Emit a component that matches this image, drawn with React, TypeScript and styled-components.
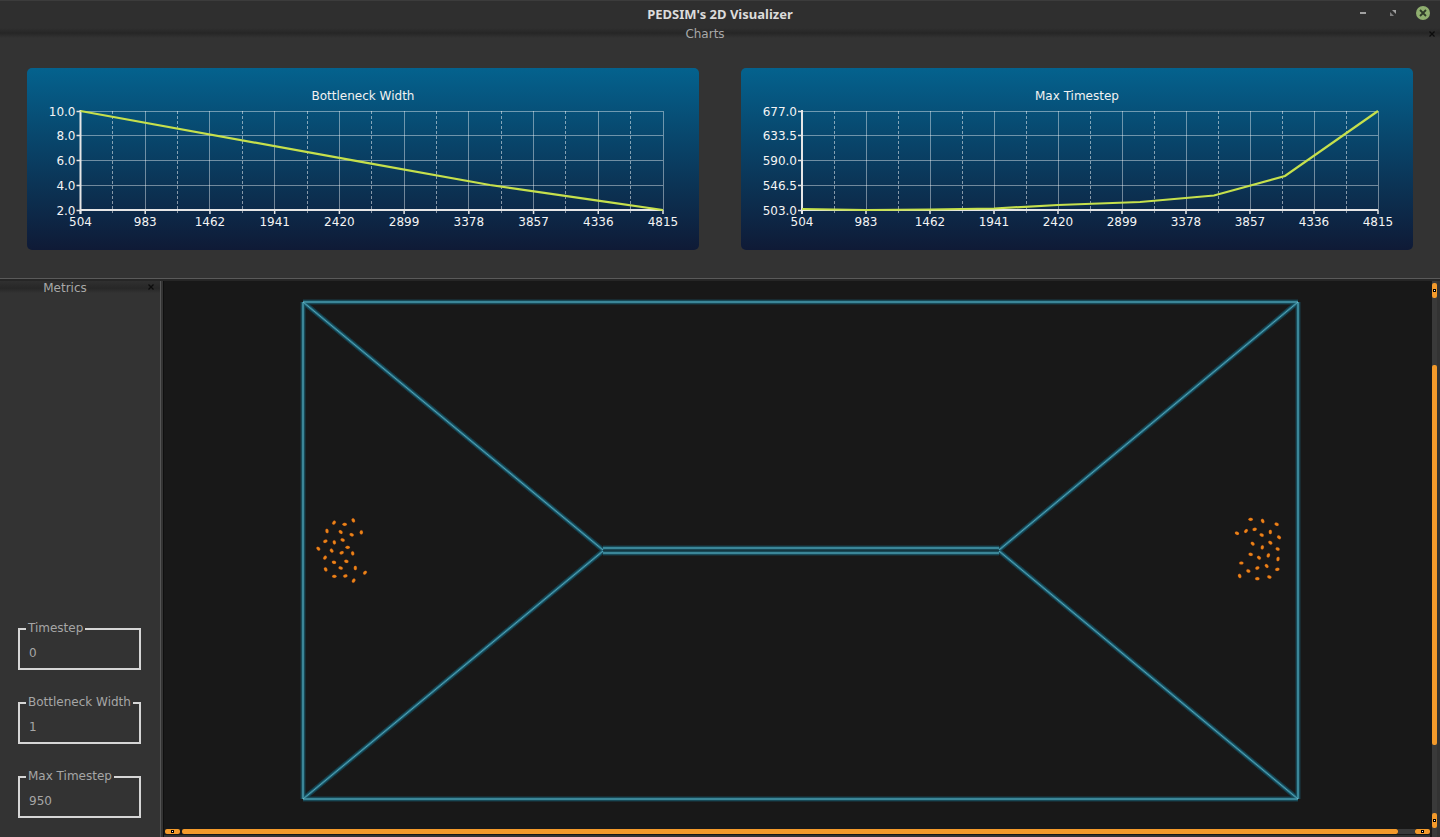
import React from "react";
import styled, { createGlobalStyle } from "styled-components";

const Global = createGlobalStyle`
  html, body { margin: 0; padding: 0; background: #333; }
  body { font-family: "DejaVu Sans", sans-serif; overflow: hidden; }
  #root { width: 1440px; height: 837px; }
`;

const Window = styled.div`
  width: 1440px;
  height: 837px;
  display: flex;
  flex-direction: column;
  background: #333333;
  overflow: hidden;
`;

const TitleBar = styled.header`
  flex: 0 0 28px;
  box-sizing: border-box;
  position: relative;
  display: flex;
  align-items: center;
  justify-content: center;
  background: #2f2f2f;
  border-top: 1px solid #3c3c3c;
  color: #dcdcdc;
  font-family: "Noto Sans", sans-serif;
  font-size: 13px;
  font-weight: 700;
  padding-bottom: 2px;
`;

const WindowControls = styled.div`
  position: absolute;
  right: 9px;
  top: 4px;
  display: flex;
  align-items: center;
  gap: 14px;
`;

const ControlIcon = styled.svg`
  display: block;
`;

const DockTitle = styled.div`
  flex: 0 0 10px;
  height: 10px;
  box-sizing: border-box;
  position: relative;
  display: flex;
  align-items: center;
  justify-content: center;
  color: #a8a8a8;
  font-size: 12px;
  padding: 2px 30px 0 0;
  background: linear-gradient(#2f2f2f, #262626 50%, #333333);
`;

const DockClose = styled.svg<{ $right: number }>`
  position: absolute;
  right: ${(p) => p.$right}px;
  top: 3px;
`;

const ChartsDock = styled.section`
  flex: 0 0 251px;
  box-sizing: border-box;
  display: flex;
  flex-direction: column;
  border-bottom: 1px solid #5a5a5a;
`;

const ChartsRow = styled.div`
  flex: 1;
  display: flex;
  gap: 42px;
  padding: 30px 27px 0;
`;

const ChartCard = styled.div`
  flex: 0 0 672px;
  height: 182px;
  border-radius: 5px;
  background: linear-gradient(#04628e, #0f1a36);
  display: flex;
  flex-direction: column;
  align-items: center;
`;

const ChartTitle = styled.div`
  color: #f2f2f2;
  font-size: 12px;
  line-height: 14px;
  margin-top: 21px;
  height: 14px;
`;

const ChartSvg = styled.svg`
  display: block;
`;

const Divider = styled.div`
  flex: 0 0 2px;
  background: #262626;
`;

const Lower = styled.div`
  flex: 1;
  min-height: 0;
  display: flex;
`;

const MetricsDock = styled.aside`
  flex: 0 0 160px;
  display: flex;
  flex-direction: column;
`;

const MetricsTitle = styled(DockTitle)`
  flex: 0 0 12px;
  height: 12px;
  padding: 2px 30px 0 0;
  background: linear-gradient(#303030, #272727 60%, #333333);
`;

const MetricsBody = styled.div`
  flex: 1;
  display: flex;
  flex-direction: column;
  justify-content: flex-end;
  gap: 32px;
  padding: 0 19px 19px 18px;
`;

const GroupBox = styled.div`
  position: relative;
  box-sizing: border-box;
  height: 42px;
  border: 2px solid #d6d6d6;
  color: #a6a6a6;
  font-size: 12px;
  display: flex;
  align-items: center;
  padding: 8px 0 0 9px;
`;

const GroupLegend = styled.span`
  position: absolute;
  left: 6px;
  top: -9px;
  line-height: 14px;
  padding: 0 2px;
  background: #333333;
  color: #a6a6a6;
  font-size: 12px;
  white-space: nowrap;
`;

const Splitter = styled.div`
  flex: 0 0 3px;
  background: #333333;
  border-left: 1px solid #555555;
  box-sizing: border-box;
`;

const SceneFrame = styled.main`
  flex: 1;
  min-width: 0;
  display: grid;
  grid-template-columns: 1fr 10px;
  grid-template-rows: 1fr 11px;
  background: #181818;
  border-left: 1px solid #0f0f0f;
`;

const SceneSvg = styled.svg`
  display: block;
`;

const VBar = styled.div`
  grid-row: 1 / span 2;
  grid-column: 2;
  box-sizing: border-box;
  background: linear-gradient(90deg, #181818 0 2px, #3a3a3a 2px 7px, #333333 7px);
  display: flex;
  flex-direction: column;
  align-items: flex-start;
  padding: 2px 0 9px 2px;
`;

const HBar = styled.div`
  box-sizing: border-box;
  display: flex;
  align-items: flex-start;
  padding: 3px 0 0 1px;
  background: linear-gradient(#181818 0 9px, #333333 9px);
`;

const ScrollButton = styled.div<{ $vertical?: boolean }>`
  flex: none;
  width: ${(p) => (p.$vertical ? "5px" : "15px")};
  height: ${(p) => (p.$vertical ? "15px" : "5px")};
  background: #f39a2b;
  border-radius: 2px;
  position: relative;
  &::after {
    content: "";
    position: absolute;
    left: ${(p) => (p.$vertical ? "1px" : "6px")};
    top: ${(p) => (p.$vertical ? "6px" : "1px")};
    width: 1px;
    height: 1px;
    background: #ffffff;
    border: 1px solid #000000;
  }
`;

const VTrack = styled.div`
  flex: 1;
  display: flex;
  flex-direction: column;
  padding-top: 67px;
  padding-bottom: 68px;
  box-sizing: border-box;
  min-height: 0;
`;

const VHandle = styled.div`
  flex: 1;
  width: 5px;
  background: #f39a2b;
  border-radius: 2px;
`;

const HTrack = styled.div`
  flex: 1;
  height: 5px;
  padding: 0 17px 0 2px;
  display: flex;
  min-width: 0;
  background: linear-gradient(90deg, transparent 0 1218px, #3a3a3a 1218px);
`;

const HHandle = styled.div`
  flex: 1;
  height: 5px;
  background: #f39a2b;
  border-radius: 2px;
`;

type Pt = [number, number];

const xLabels = ["504", "983", "1462", "1941", "2420", "2899", "3378", "3857", "4336", "4815"];

interface ChartProps {
  title: string;
  yLabels: string[];
  left: number;
  right: number;
  line: Pt[];
}

const crisp = (v: number) => Math.floor(v) + 0.5;

const Chart: React.FC<ChartProps> = ({ title, yLabels, left, right, line }) => {
  const top = 8;
  const bottom = 107;
  const n = xLabels.length - 1;
  const step = (right - left) / n;
  const xs = xLabels.map((_, i) => left + i * step);
  const ys = yLabels.map((_, i) => top + ((bottom - top) * i) / (yLabels.length - 1));
  const textFont = { fontFamily: '"DejaVu Sans", sans-serif', fontSize: 12 };
  return (
    <ChartCard>
      <ChartTitle>{title}</ChartTitle>
      <ChartSvg width={672} height={147} viewBox="0 0 672 147">
        {ys.slice(0, -1).map((y) => (
          <line key={y} x1={left} x2={right} y1={crisp(y)} y2={crisp(y)} stroke="#fff" strokeOpacity={0.42} strokeWidth={1} />
        ))}
        {xs.slice(1).map((x) => (
          <line key={x} x1={crisp(x)} x2={crisp(x)} y1={top} y2={bottom} stroke="#fff" strokeOpacity={0.42} strokeWidth={1} />
        ))}
        {xs.slice(0, -1).map((x) => (
          <line
            key={x}
            x1={crisp(x + step / 2)}
            x2={crisp(x + step / 2)}
            y1={top}
            y2={bottom + 3}
            stroke="#fff"
            strokeOpacity={0.5}
            strokeWidth={1}
            strokeDasharray="3 2"
          />
        ))}
        <line x1={left} x2={right} y1={bottom} y2={bottom} stroke="#e6e6e6" strokeWidth={2} />
        <line x1={left} x2={left} y1={top - 1} y2={bottom + 4} stroke="#e6e6e6" strokeWidth={2} />
        {ys.map((y) => (
          <line key={y} x1={left - 4} x2={left} y1={crisp(y)} y2={crisp(y)} stroke="#e6e6e6" strokeWidth={1.5} />
        ))}
        {xs.map((x) => (
          <line key={x} x1={x} x2={x} y1={bottom} y2={bottom + 4} stroke="#e6e6e6" strokeWidth={1.5} />
        ))}
        <polyline
          points={line.map((p) => p.join(",")).join(" ")}
          fill="none"
          stroke="#c6e04c"
          strokeWidth={2.2}
        />
        {yLabels.map((l, i) => (
          <text key={l} x={left - 5} y={Math.floor(ys[i]) + 5} textAnchor="end" fill="#f4f4f4" style={textFont}>
            {l}
          </text>
        ))}
        {xLabels.map((l, i) => (
          <text key={l} x={xs[i]} y={bottom + 16} textAnchor="middle" fill="#f4f4f4" style={textFont}>
            {l}
          </text>
        ))}
      </ChartSvg>
    </ChartCard>
  );
};

// scene coordinates are relative to the canvas origin at (164, 281)
const ox = 164;
const oy = 281;
const wallSegments: [number, number, number, number][] = [
  [303, 302, 1298, 302],
  [303, 799, 1298, 799],
  [303, 302, 303, 799],
  [1298, 302, 1298, 799],
  [303, 302, 603, 550],
  [303, 799, 603, 551],
  [1298, 302, 999, 550],
  [1298, 799, 999, 551],
  [603, 548, 999, 548],
  [603, 553, 999, 553],
];

const leftCrowd: Pt[] = [
  [102, 53], [134, 58], [160, 46], [184, 82], [81, 78], [122, 81], [155, 89], [76, 109], [103, 112],
  [128, 105], [143, 127], [55, 131], [95, 137], [125, 143], [158, 145], [75, 158], [102, 172], [139, 169],
  [122, 189], [166, 189], [77, 193], [195, 203], [103, 214], [136, 213], [161, 227],
];
const rightCrowd: Pt[] = [
  [92, 43], [128, 48], [170, 58], [51, 85], [78, 78], [104, 73], [151, 81], [125, 90], [177, 97],
  [98, 116], [151, 113], [127, 127], [173, 132], [92, 148], [117, 158], [145, 151], [174, 162], [64, 174],
  [112, 189], [140, 183], [172, 193], [85, 198], [59, 213], [148, 216], [112, 221],
];
const leftAngles = [-50, 0, 60, 90, 80, 40, 20, -20, 80, 20, 0, 45, 50, -20, 80, -50, 15, 15, 10, 90, 60, -45, 0, -15, -55];
const rightAngles = [0, 60, 20, 20, -50, -15, 90, 25, 40, 45, 45, -80, 30, 10, 40, -70, -80, 0, -30, 50, -10, 30, 65, 20, 0];

const WallLayer: React.FC = () => (
  <>
    <defs>
      <filter id="wall-glow" x="-5%" y="-5%" width="110%" height="110%">
        <feGaussianBlur stdDeviation="0.7" />
      </filter>
    </defs>
    <g filter="url(#wall-glow)">
      {[
        { w: 5, c: "#144655", o: 0.8 },
        { w: 2.5, c: "#226b7e", o: 1 },
      ].map((s) => (
        <g key={s.w} stroke={s.c} strokeOpacity={s.o} strokeWidth={s.w}>
          {wallSegments.map(([a, b, c, d]) => (
            <line key={`${a}-${b}-${c}-${d}`} x1={a - ox} y1={b - oy} x2={c - ox} y2={d - oy} />
          ))}
        </g>
      ))}
    </g>
    <g stroke="#7fcfe0" strokeOpacity={0.55} strokeWidth={1}>
      {wallSegments.map(([a, b, c, d]) => (
        <line key={`${a}-${b}-${c}-${d}`} x1={a - ox} y1={b - oy} x2={c - ox} y2={d - oy} />
      ))}
    </g>
  </>
);

const Crowd: React.FC<{ points: Pt[]; angles: number[]; baseX: number }> = ({ points, angles, baseX }) => (
  <>
    {points.map(([zx, zy], i) => {
      const x = baseX + zx / 3 - ox;
      const y = 505 + zy / 3 - oy;
      return (
        <ellipse
          key={`${zx}-${zy}`}
          cx={x}
          cy={y}
          rx={2.2}
          ry={1.6}
          fill="#e88518"
          stroke="#b5300f"
          strokeOpacity={0.5}
          strokeWidth={0.4}
          transform={`rotate(${angles[i]} ${x} ${y})`}
        />
      );
    })}
  </>
);

const CloseGlyph: React.FC<{ right: number }> = ({ right }) => (
  <DockClose $right={right} width={6} height={6} viewBox="0 0 6 6">
    <path d="M0.5 0.5 L5.5 5.5 M5.5 0.5 L0.5 5.5" stroke="#0c0c0c" strokeWidth={1.3} />
  </DockClose>
);

const firstLine: Pt[] = [[53.5, 8], [333, 58.7], [463, 82], [571, 97.7], [636, 107]];

const secondLine: Pt[] = [
  [61, 106], [125, 107], [189, 106.5], [253, 105.5], [317, 102], [399, 99], [473, 92.5], [544, 73], [637, 8],
];

export default function App() {
  return (
    <Window>
      <Global />
      <TitleBar>
        PEDSIM's 2D Visualizer
        <WindowControls>
          <ControlIcon width={16} height={16} viewBox="0 0 16 16">
            <rect x={5} y={7} width={6} height={2} fill="#a0a0a0" />
          </ControlIcon>
          <ControlIcon width={16} height={16} viewBox="0 0 16 16">
            <path d="M7 5 H11 V9 Z" fill="#a0a0a0" />
            <path d="M5 7 V11 H9 Z" fill="#808080" />
          </ControlIcon>
          <ControlIcon width={16} height={16} viewBox="0 0 16 16">
            <circle cx={8} cy={8} r={7} fill="#8fae6f" />
            <path d="M5 5 L11 11 M11 5 L5 11" stroke="#2e3a28" strokeWidth={1.8} />
          </ControlIcon>
        </WindowControls>
      </TitleBar>
      <ChartsDock>
        <DockTitle>
          Charts
          <CloseGlyph right={5} />
        </DockTitle>
        <ChartsRow>
          <Chart
            title="Bottleneck Width"
            yLabels={["10.0", "8.0", "6.0", "4.0", "2.0"]}
            left={53.5}
            right={636}
            line={firstLine}
          />
          <Chart
            title="Max Timestep"
            yLabels={["677.0", "633.5", "590.0", "546.5", "503.0"]}
            left={61}
            right={637}
            line={secondLine}
          />
        </ChartsRow>
      </ChartsDock>
      <Divider />
      <Lower>
        <MetricsDock>
          <MetricsTitle>
            Metrics
            <CloseGlyph right={6} />
          </MetricsTitle>
          <MetricsBody>
            <GroupBox>
              <GroupLegend>Timestep</GroupLegend>0
            </GroupBox>
            <GroupBox>
              <GroupLegend>Bottleneck Width</GroupLegend>1
            </GroupBox>
            <GroupBox>
              <GroupLegend>Max Timestep</GroupLegend>950
            </GroupBox>
          </MetricsBody>
        </MetricsDock>
        <Splitter />
        <SceneFrame>
          <SceneSvg width={1266} height={545} viewBox="0 0 1266 545">
            <WallLayer />
            <Crowd points={leftCrowd} angles={leftAngles} baseX={300} />
            <Crowd points={rightCrowd} angles={rightAngles} baseX={1220} />
          </SceneSvg>
          <VBar>
            <ScrollButton $vertical />
            <VTrack>
              <VHandle />
            </VTrack>
            <ScrollButton $vertical />
          </VBar>
          <HBar>
            <ScrollButton />
            <HTrack>
              <HHandle />
            </HTrack>
            <ScrollButton />
          </HBar>
        </SceneFrame>
      </Lower>
    </Window>
  );
}
